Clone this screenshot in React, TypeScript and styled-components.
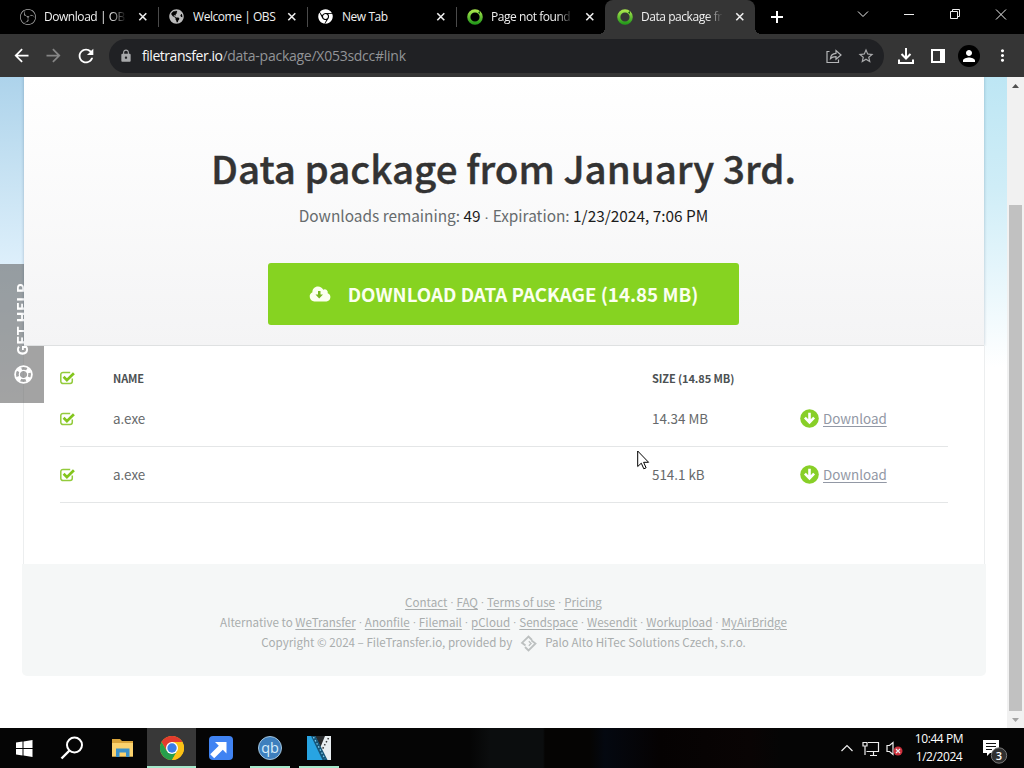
import React from 'react';
import styled, { createGlobalStyle, css } from 'styled-components';
import { FaChrome, FaGlobeAmericas } from 'react-icons/fa';
import { SiObsstudio } from 'react-icons/si';
import { MdArrowBack, MdArrowForward, MdLock, MdRefresh, MdStarBorder, MdPerson, MdMoreVert } from 'react-icons/md';

const GlobalStyle = createGlobalStyle`
  * { box-sizing: border-box; }
  body {
    margin: 0;
    overflow: hidden;
    background: #fff;
  }
`;

const uiFont = css`
  font-family: 'Open Sans', 'Noto Sans', sans-serif;
`;

const Screen = styled.div`
  width: 1024px;
  height: 768px;
  display: flex;
  flex-direction: column;
  position: relative;
  overflow: hidden;
`;

/* ---------- browser ---------- */

const TabStrip = styled.header`
  ${uiFont}
  height: 34px;
  flex: none;
  background: #000;
  display: flex;
  padding-left: 10px;
  color: #f0f0f0;
`;

const TabBox = styled.div<{ $active?: boolean; $divider?: boolean }>`
  width: 149px;
  height: 34px;
  display: flex;
  align-items: center;
  padding-left: 10px;
  position: relative;

  ${({ $divider }) => $divider && css`
    &::after {
      content: '';
      position: absolute;
      right: 0;
      top: 7px;
      width: 1px;
      height: 20px;
      background: #4a4a4a;
    }
  `}

  ${({ $active }) => $active && css`
    background: #353535;
    border-radius: 8px 8px 0 0;
    margin: 0 1px 0 -1px;
    padding-left: 12px;
    width: 150px;

    &::before,
    &::after {
      content: '';
      position: absolute;
      bottom: 0;
      width: 6px;
      height: 6px;
    }
    &::before {
      left: -6px;
      background: radial-gradient(circle at 0 0, transparent 6px, #353535 6px);
    }
    &::after {
      right: -6px;
      background: radial-gradient(circle at 100% 0, transparent 6px, #353535 6px);
    }
  `}
`;

const TabIcon = styled.span`
  width: 16px;
  height: 16px;
  display: flex;
  margin-right: 8px;
`;

const TabTitle = styled.span<{ $fade?: boolean }>`
  width: 83px;
  overflow: hidden;
  white-space: nowrap;
  font-size: 12px;
  line-height: 18px;
  letter-spacing: -0.45px;
  ${({ $fade }) => $fade && css`
    mask-image: linear-gradient(90deg, #000 66px, transparent 82px);
  `}
`;

const TabClose = styled.span`
  display: flex;
  margin-left: 11px;
`;

const NewTab = styled.span`
  display: flex;
  align-items: center;
  margin-left: 14px;
`;

const WindowControls = styled.div`
  margin-left: auto;
  display: flex;

  svg {
    display: block;
  }
`;

const Toolbar = styled.div`
  ${uiFont}
  height: 43px;
  flex: none;
  background: #353535;
  display: flex;
  align-items: center;
  padding: 0 10px 0 11px;
  color: #fff;
`;

const NavIcon = styled.span<{ $dim?: boolean }>`
  display: flex;
  width: 22px;
  margin-right: 10px;
  color: ${({ $dim }) => ($dim ? '#858585' : '#fff')};
`;

const AddressBar = styled.div`
  width: 775px;
  height: 34px;
  margin-left: 2px;
  border-radius: 17px;
  background: #202124;
  display: flex;
  align-items: center;
  padding: 0 9px 0 10px;
  color: #a8a9ab;
`;

const Url = styled.span`
  flex: 1;
  padding-left: 9px;
  font-size: 14px;
  letter-spacing: -0.26px;
  color: #929497;

  b {
    font-weight: 400;
    letter-spacing: -0.46px;
    color: #f8f8f8;
  }
`;

const AddressActions = styled.span`
  display: flex;
  gap: 14px;
`;

const ToolbarActions = styled.div`
  display: flex;
  align-items: center;
  gap: 13px;
  padding-left: 13px;
`;

const PanelIcon = styled.svg`
  margin-left: 3px;
`;

const Avatar = styled.span`
  width: 22px;
  height: 22px;
  border-radius: 50%;
  background: #000;
  display: flex;
  align-items: center;
  justify-content: center;
`;

/* ---------- page ---------- */

const Viewport = styled.div`
  flex: 1;
  display: flex;
  min-height: 0;
`;

const Page = styled.main`
  position: relative;
  width: 1007px;
  padding: 0 23px 0 24px;
  font-family: 'Noto Sans CJK SC', 'Noto Sans CJK JP', sans-serif;
  background:
    linear-gradient(180deg, #add3eb 0, #c5e1f2 90px, #ddeffb 187px, #fff 330px) 0 0 / 24px 100% no-repeat,
    linear-gradient(180deg, #bde6f4 0, #cfedf7 110px, #e4f5fb 190px, #fff 290px) 984px 0 / 23px 100% no-repeat,
    #fff;
`;

const Summary = styled.section`
  position: relative;
  z-index: 2;
  height: 269px;
  padding: 63px 1px 0 0;
  background: linear-gradient(180deg, #fff, #f4f4f5);
  border-bottom: 1px solid #dfe1e2;
  box-shadow: 0 0 3px rgba(0, 40, 70, 0.25);
  clip-path: inset(0 -3px 0 -3px);
  display: flex;
  flex-direction: column;
  align-items: center;
`;

const Title = styled.h1`
  margin: 0;
  color: #333;
  font-size: 38.5px;
  line-height: 54px;
  font-weight: 500;
  white-space: nowrap;
  -webkit-text-stroke: 0.4px #333;
`;

const Meta = styled.p`
  height: 24px;
  margin: 9px 0 0;
  font-size: 15.4px;
  line-height: 24px;
  color: #666b6d;
  white-space: nowrap;

  b {
    font-weight: 400;
    color: #1c1c1c;
  }
`;

/* The CJK face draws a full-width middle dot, so this one is set in a Latin face. */
const Dot = styled.span<{ $width: number }>`
  display: inline-block;
  width: ${({ $width }) => $width}px;
  text-align: center;
  font-family: 'Liberation Sans', sans-serif;
  letter-spacing: 0;
`;

const DownloadAll = styled.button`
  width: 471px;
  height: 62px;
  margin-top: 36px;
  padding: 0 0 2px;
  border: 0;
  border-radius: 3px;
  background: #86d321;
  color: #fbffef;
  font-family: inherit;
  font-size: 18.75px;
  font-weight: 700;
  display: flex;
  align-items: center;
  justify-content: center;
  gap: 17px;
  white-space: nowrap;

  svg {
    margin-top: 2px;
  }
`;

const FileList = styled.section`
  height: 218px;
  padding: 18px 36px 0;
  border-left: 1px solid #eceeef;
  border-right: 1px solid #eceeef;
  margin: 0 -1px;
`;

const Row = styled.div<{ $head?: boolean }>`
  display: grid;
  grid-template-columns: 53px 539px 148px 1fr;
  align-items: center;
  height: 56px;
  color: #66696b;
  font-size: 13.4px;
  line-height: 20px;

  ${({ $head }) => $head ? css`
    height: 27px;
    font-size: 11px;
    font-weight: 700;
    color: #4c5153;
    letter-spacing: -0.1px;
  ` : css`
    border-bottom: 1px solid #e4e6e7;

    span {
      padding-bottom: 2px;
    }
  `}
`;

const DownloadLink = styled.a`
  display: flex;
  align-items: center;
  gap: 4px;
  color: #9298a5;

  span {
    text-decoration: underline;
    text-underline-offset: 2px;
  }
`;

const Footer = styled.footer`
  height: 112px;
  margin: 0 -2px;
  padding: 28px 1px 0 0;
  background: #f5f7f7;
  border-radius: 0 0 5px 5px;
  color: #a9adad;
  font-size: 11.6px;
`;

const FooterLine = styled.p`
  margin: 0;
  height: 20px;
  line-height: 20px;
  display: flex;
  align-items: center;
  justify-content: center;
  white-space: pre;

  a {
    text-decoration: underline;
    text-underline-offset: 2px;
  }

  svg {
    margin: 2px 8px 0;
  }
`;

const HelpTab = styled.aside`
  position: absolute;
  z-index: 1;
  left: 0;
  top: 187px;
  width: 44px;
  height: 139px;
  background: rgba(96, 96, 96, 0.58);
  color: #fff;
  display: flex;
  flex-direction: column;
  align-items: center;
  justify-content: flex-end;
  gap: 10px;
  padding: 0 0 19px 2px;
`;

const HelpLabel = styled.span`
  writing-mode: vertical-rl;
  transform: rotate(180deg);
  font-size: 14.6px;
  line-height: 20px;
  font-weight: 700;
  letter-spacing: 0.3px;
  margin-right: 2px;
`;

const Scrollbar = styled.div`
  width: 17px;
  background: #f1f1f1;
  display: flex;
  flex-direction: column;
  align-items: center;
  justify-content: space-between;
`;

const ScrollThumb = styled.div`
  width: 13px;
  height: 506px;
  margin-top: 111px;
  background: #c1c1c1;
`;

/* ---------- taskbar ---------- */

const Taskbar = styled.footer`
  ${uiFont}
  height: 40px;
  flex: none;
  display: flex;
  color: #fff;
  background: linear-gradient(90deg, #050505 0 470px, #0b0d0e 490px 543px, #050403 545px 590px, #040810 605px, #050202 660px, #090404 750px, #050505 780px);
`;

const TaskItem = styled.span<{ $active?: boolean; $running?: boolean }>`
  width: 49px;
  display: flex;
  align-items: center;
  justify-content: center;
  background: ${({ $active }) => ($active ? '#383838' : 'transparent')};
  position: relative;

  ${({ $running, $active }) => $running && css`
    &::after {
      content: '';
      position: absolute;
      bottom: 0;
      left: ${$active ? 0 : 5}px;
      right: ${$active ? 0 : 4}px;
      height: 2px;
      background: #a5e8cb;
    }
  `}
`;

const SearchGlyph = styled.svg`
  margin-right: 3px;
`;

const Tray = styled.div`
  margin-left: auto;
  display: flex;
  align-items: center;
`;

const Clock = styled.div`
  width: 60px;
  margin: 0 14px 0 0;
  text-align: center;
  font-size: 12px;
  line-height: 18px;
  letter-spacing: -0.42px;
  white-space: nowrap;
`;

const Notifications = styled.span`
  display: flex;
  width: 41px;
  padding-top: 4px;
`;

const Pointer = styled.svg`
  position: absolute;
  left: 637px;
  top: 450px;
  z-index: 5;
`;

/* ---------- drawings ---------- */

const Cross = () => (
  <svg width="10" height="10" viewBox="0 0 10 10">
    <path d="M1.3 1.3l7 7M8.3 1.3l-7 7" stroke="#eee" strokeWidth="1.6" />
  </svg>
);

const RingIcon = () => (
  <svg width="16" height="16" viewBox="0 0 16 16">
    <defs>
      <linearGradient id="ring" x1="0" y1="0" x2="0" y2="1">
        <stop offset="0" stopColor="#a5e44c" />
        <stop offset="1" stopColor="#279b1c" />
      </linearGradient>
    </defs>
    <circle cx="8" cy="8" r="6.2" fill="none" stroke="url(#ring)" strokeWidth="3.2" />
    <path d="M11 3.5l2-1.5v3z" fill="#17650e" />
  </svg>
);

const CheckIcon = () => (
  <svg width="16" height="14" viewBox="0 0 16 14">
    <path d="M12.3 7.5v2.8a2.2 2.2 0 0 1-2.2 2.2H3a2.2 2.2 0 0 1-2.2-2.2V3.6A2.2 2.2 0 0 1 3 1.4h7.2" fill="none" stroke="#93cb3c" strokeWidth="1.5" />
    <path d="M3.6 5.8l3.3 3.4 7-7" fill="none" stroke="#83c51c" strokeWidth="2.7" />
  </svg>
);

const CloudIcon = () => (
  <svg width="22" height="16" viewBox="0 0 22 16">
    <path d="M5.3 15.4A4.8 4.8 0 0 1 3.4 6.3C3.2 3 5.7.4 9 .4c2.4 0 4.3 1.3 5.3 3.3a3.1 3.1 0 0 1 4.4 3.6 4.2 4.2 0 0 1-1.2 8.1z" fill="#fbffef" />
    <path d="M9 4.9h2.5v3.7H14l-3.8 3.9-3.7-3.9H9z" fill="#78b91f" />
  </svg>
);

const DownIcon = () => (
  <svg width="19" height="19" viewBox="0 0 19 19">
    <circle cx="9.5" cy="9.5" r="9.3" fill="#88cf27" />
    <path d="M9.5 3.7v9M4.9 8.7l4.6 4.7 4.6-4.7" fill="none" stroke="#fff" strokeWidth="2.6" />
  </svg>
);

const LifeRing = () => (
  <svg width="19" height="19" viewBox="0 0 19 19">
    <circle cx="9.5" cy="9.5" r="8.4" fill="none" stroke="#fff" strokeWidth="1.8" />
    <circle cx="9.5" cy="9.5" r="6" fill="none" stroke="#fff" strokeWidth="4" strokeDasharray="4.2 5.225" strokeDashoffset="-2.6" />
    <circle cx="9.5" cy="9.5" r="4.2" fill="none" stroke="#fff" strokeWidth="1.2" />
  </svg>
);

const ChromeLogo = () => (
  <svg width="24" height="24" viewBox="0 0 24 24">
    <circle cx="12" cy="12" r="12" fill="#fbc116" />
    <path d="M1.6 6A12 12 0 0 1 22.4 6H12L6.8 15z" fill="#e33b2e" />
    <path d="M1.6 6A12 12 0 0 0 12 24l5.2-9H6.8z" fill="#269f4b" />
    <path d="M12 6h10.4A12 12 0 0 1 12 24l5.2-9z" fill="#fbc116" />
    <circle cx="12" cy="12" r="6" fill="#fff" />
    <circle cx="12" cy="12" r="4.7" fill="#397de8" />
  </svg>
);

const tabs = [
  { title: 'Download | OBS', icon: <SiObsstudio size={16} color="#aaa" />, fade: true, divider: true },
  { title: 'Welcome | OBS', icon: <FaGlobeAmericas size={15} color="#bbb" />, divider: true },
  { title: 'New Tab', icon: <FaChrome size={15} color="#fff" />, divider: true },
  { title: 'Page not found', icon: <RingIcon />, fade: true },
  { title: 'Data package fr', icon: <RingIcon />, fade: true, active: true },
];

const files = [
  { name: 'a.exe', size: '14.34 MB' },
  { name: 'a.exe', size: '514.1 kB' },
];

const links = ['Contact', 'FAQ', 'Terms of use', 'Pricing'];
const alternatives = ['WeTransfer', 'Anonfile', 'Filemail', 'pCloud', 'Sendspace', 'Wesendit', 'Workupload', 'MyAirBridge'];

const LinkList = ({ items }: { items: string[] }) => (
  <>
    {items.map((item, i) => (
      <React.Fragment key={item}>
        {i > 0 && <Dot $width={9.1}>·</Dot>}
        <a>{item}</a>
      </React.Fragment>
    ))}
  </>
);

const Browser = () => (
  <>
    <TabStrip>
      {tabs.map(tab => (
        <TabBox key={tab.title} $active={tab.active} $divider={tab.divider}>
          <TabIcon>{tab.icon}</TabIcon>
          <TabTitle $fade={tab.fade}>{tab.title}</TabTitle>
          <TabClose><Cross /></TabClose>
        </TabBox>
      ))}
      <NewTab>
        <svg width="14" height="14" viewBox="0 0 14 14">
          <path d="M7 1v12M1 7h12" stroke="#fff" strokeWidth="2" />
        </svg>
      </NewTab>
      <WindowControls>
        <svg width="184" height="30" viewBox="0 0 184 30" fill="none" stroke="#eee">
          <path d="M18 11.5l5 5 5-5" />
          <path d="M64 14.5h10" />
          <path d="M110.5 11.5h7v7h-7zM112.5 11.5v-2h7v7h-2" />
          <path d="M156 9.5l10 10M166 9.5l-10 10" />
        </svg>
      </WindowControls>
    </TabStrip>
    <Toolbar>
      <NavIcon><MdArrowBack size={21} /></NavIcon>
      <NavIcon $dim><MdArrowForward size={21} /></NavIcon>
      <NavIcon><MdRefresh size={22} /></NavIcon>
      <AddressBar>
        <MdLock size={14} />
        <Url><b>filetransfer.io</b>/data-package/X053sdcc#link</Url>
        <AddressActions>
          <svg width="18" height="18" viewBox="0 0 18 18" fill="none" stroke="#b5b6b8" strokeWidth="1.2">
            <path d="M4.5 4.5H2v11h11.5v-3" />
            <path d="M5.500 11.500c.3-3.500 2-5 5.500-5.200V3.500l5 4.500-5 4.300V9.600c-2.500 0-4.200.5-5.500 1.900z" />
          </svg>
          <MdStarBorder size={18} />
        </AddressActions>
      </AddressBar>
      <ToolbarActions>
        <svg width="18" height="18" viewBox="0 0 18 18" fill="none" stroke="#fff" strokeWidth="2">
          <path d="M9 1v10M4.500 7l4.500 4.500L13.500 7M2 12.500V16h14v-3.500" />
        </svg>
        <PanelIcon width="14" height="14" viewBox="0 0 14 14">
          <path d="M0 0h14v14H0zM2 2v10h7V2z" fill="#fff" fillRule="evenodd" />
        </PanelIcon>
        <Avatar><MdPerson size={18} /></Avatar>
        <MdMoreVert size={19} />
      </ToolbarActions>
    </Toolbar>
  </>
);

const SystemTaskbar = () => (
  <Taskbar>
    <TaskItem>
      <svg width="17" height="17" viewBox="0 0 17 17">
        <path d="M0 2.500L6.500 1.600v6.400H0zM7.500 1.400L16.500 0v8h-9zM0 9h6.500v6.400L0 14.500zM7.500 9h9v8l-9-1.400z" fill="#fff" />
      </svg>
    </TaskItem>
    <TaskItem>
      <SearchGlyph width="24" height="24" viewBox="0 0 24 24" fill="none" stroke="#fff">
        <circle cx="14.500" cy="9" r="7.500" strokeWidth="2" />
        <path d="M9.500 14.500L1.500 22.500" strokeWidth="2.400" />
      </SearchGlyph>
    </TaskItem>
    <TaskItem>
      <svg width="22" height="18" viewBox="0 0 22 18">
        <path d="M0 0h8l2 2h11v15.500H0z" fill="#d9a43a" />
        <path d="M0 4h21v13.500H0z" fill="#fbd26d" />
        <path d="M4 9.500h13.500V18H14v-4.500H7.500V18H4z" fill="#3b91c9" />
      </svg>
    </TaskItem>
    <TaskItem $active $running><ChromeLogo /></TaskItem>
    <TaskItem>
      <svg width="24" height="24" viewBox="0 0 24 24">
        <rect width="24" height="24" rx="4" fill="#4083f2" />
        <path d="M6 6h11.500v11.500l-3.700-3.700-8.600 8.400-4-4 8.600-8.400z" fill="#fff" />
      </svg>
    </TaskItem>
    <TaskItem $running>
      <svg width="24" height="24" viewBox="0 0 24 24">
        <circle cx="12" cy="12" r="11.500" fill="#3e7fbd" stroke="#a4c5dd" />
        <text x="12" y="16.500" textAnchor="middle" fontFamily="Open Sans, sans-serif" fontSize="14.500" fill="#d6edfb">qb</text>
      </svg>
    </TaskItem>
    <TaskItem $running>
      <svg width="24" height="24" viewBox="0 0 24 24">
        <path d="M0 0h24v24H0z" fill="#e8eef1" />
        <path d="M8 0h10l-4.500 11z" fill="#282a2c" />
        <path d="M0 0h7l11 24H0z" fill="#28a4e2" />
        <path d="M4 0h4.500l12 24h-5z" fill="#155477" />
        <path d="M6.500 1l11.500 22" stroke="#82cdec" strokeWidth="1.300" strokeDasharray="1.500 2" />
        <path d="M21.500 2l-6 11" stroke="#333" strokeWidth="1.500" strokeDasharray="1.500 2" />
      </svg>
    </TaskItem>
    <Tray>
      <svg width="70" height="24" viewBox="0 0 70 24" fill="none" stroke="#eee" strokeWidth="1.200">
        <path d="M2.500 15l5.500-5.500 5.500 5.500" />
        <path d="M29 6.500h10.500v9H27.500M24 6.500h4v3.500h-4zM26 10v9M31 19.500h7M34.500 15.500v4" />
        <path d="M48 9.500h2.500l3.500-3v12l-3.500-3H48z" />
        <circle cx="59" cy="15" r="4.500" fill="#cd313d" stroke="none" />
        <path d="M57 13l4 4M61 13l-4 4" />
      </svg>
      <Clock>10:44 PM<br />1/2/2024</Clock>
      <Notifications>
        <svg width="26" height="27" viewBox="0 0 26 27">
          <path d="M0 3h16v13H7l-3 3v-3H0z" fill="#fff" />
          <path d="M3 6.500h10M3 9.500h10M3 12.500h6" stroke="#111" />
          <circle cx="16" cy="18.500" r="7.700" fill="#303030" stroke="#777" />
          <text x="16" y="22.500" textAnchor="middle" fontFamily="Open Sans, sans-serif" fontSize="11" fontWeight="600" fill="#fff">3</text>
        </svg>
      </Notifications>
    </Tray>
  </Taskbar>
);

const App = () => (
  <>
    <GlobalStyle />
    <Screen>
      <Browser />
      <Viewport>
        <Page>
          <HelpTab>
            <HelpLabel>GET HELP</HelpLabel>
            <LifeRing />
          </HelpTab>
          <Summary>
            <Title>Data package from January 3rd.</Title>
            <Meta>
              Downloads remaining: <b>49</b><Dot $width={12}>·</Dot>Expiration: <b>1/23/2024, 7:06 PM</b>
            </Meta>
            <DownloadAll>
              <CloudIcon />
              DOWNLOAD DATA PACKAGE (14.85 MB)
            </DownloadAll>
          </Summary>
          <FileList>
            <Row $head>
              <CheckIcon />
              <span>NAME</span>
              <span>SIZE (14.85 MB)</span>
            </Row>
            {files.map(file => (
              <Row key={file.size}>
                <CheckIcon />
                <span>{file.name}</span>
                <span>{file.size}</span>
                <DownloadLink>
                  <DownIcon />
                  <span>Download</span>
                </DownloadLink>
              </Row>
            ))}
          </FileList>
          <Footer>
            <FooterLine><LinkList items={links} /></FooterLine>
            <FooterLine>Alternative to <LinkList items={alternatives} /></FooterLine>
            <FooterLine>
              Copyright © 2024 – FileTransfer.io, provided by
              <svg width="17" height="17" viewBox="0 0 17 17" fill="none" stroke="#bcc0c0" strokeWidth="1.8">
                <path d="M5.500 10.500L2 7.800 8.500 1.500l3.500 3.500M11.500 5.500l4 3-7 7-3.500-3.500" />
                <path d="M8.800 6.200l2.300 2.300-2.300 2.300" strokeWidth="1.300" />
              </svg>
              Palo Alto HiTec Solutions Czech, s.r.o.
            </FooterLine>
          </Footer>
        </Page>
        <Scrollbar>
          <svg width="17" height="17" viewBox="0 0 17 17"><path d="M5 11l3.500-4 3.500 4z" fill="#505050" /></svg>
          <ScrollThumb />
          <svg width="17" height="17" viewBox="0 0 17 17"><path d="M5 7l3.500 4L12 7z" fill="#a3a3a3" /></svg>
        </Scrollbar>
      </Viewport>
      <SystemTaskbar />
      <Pointer width="13" height="20" viewBox="0 0 13 20">
        <path d="M.7 1v15.500l3.600-3.300 2.500 5.600 2.300-1-2.500-5.500h5z" fill="#fff" stroke="#000" />
      </Pointer>
    </Screen>
  </>
);

export default App;
